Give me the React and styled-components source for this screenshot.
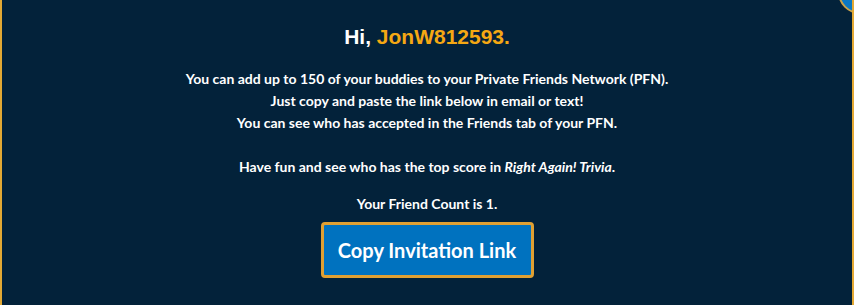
import React from "react";
import styled, { createGlobalStyle } from "styled-components";

const GlobalStyle = createGlobalStyle`
  html, body {
    margin: 0;
    padding: 0;
    background: #03223a;
  }
`;

const App = () => {
  return (
    <>
      <GlobalStyle />
      <Panel>
        <CloseDot />
        <Greeting>
          Hi, <span className="name">JonW812593.</span>
        </Greeting>
        <Copy>
          You can add up to 150 of your buddies to your Private Friends Network (PFN).
          <br />
          Just copy and paste the link below in email or text!
          <br />
          You can see who has accepted in the Friends tab of your PFN.
        </Copy>
        <Copy $top={22}>
          Have fun and see who has the top score in <em>Right Again! Trivia</em>.
        </Copy>
        <Copy $top={15}>Your Friend Count is 1.</Copy>
        <InviteButton>Copy Invitation Link</InviteButton>
      </Panel>
    </>
  );
};

const Panel = styled.div`
  position: relative;
  box-sizing: border-box;
  width: 854px;
  height: 305px;
  overflow: hidden;
  background: #03223a;
  border-left: 2px solid #e3a934;
  border-right: 2px solid #e3a934;
  display: flex;
  flex-direction: column;
  align-items: center;
  padding-top: 23px;
  color: #fff;
`;

const CloseDot = styled.div`
  position: absolute;
  top: -30px;
  right: -30px;
  width: 40px;
  height: 40px;
  border-radius: 50%;
  background: #0b78c4;
  border: 2px solid #c9a24a;
`;

const Greeting = styled.h1`
  margin: 0;
  font-family: "Liberation Sans", Arial, sans-serif;
  font-size: 21px;
  font-weight: 700;
  line-height: 28px;
  .name {
    color: #f5a813;
  }
`;

const Copy = styled.p`
  margin: ${(p) => p.$top || 17}px 0 0;
  font-family: Lato, "Open Sans", sans-serif;
  font-size: 14px;
  font-weight: 700;
  line-height: 22px;
  text-align: center;
  em {
    font-style: italic;
  }
`;

const InviteButton = styled.button`
  margin-top: 7px;
  box-sizing: border-box;
  width: 213px;
  height: 56px;
  background: #0072bf;
  border: 3px solid #e0a032;
  border-radius: 4px;
  color: #fff;
  font-family: Lato, "Open Sans", sans-serif;
  font-size: 20px;
  font-weight: 700;
  cursor: pointer;
`;

export default App;
